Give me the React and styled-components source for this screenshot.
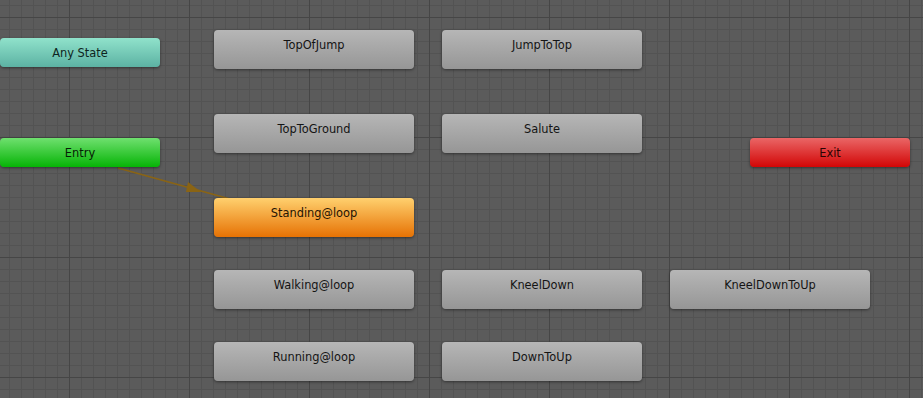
import React from 'react'
import styled, { createGlobalStyle, css } from 'styled-components'

const GlobalStyle = createGlobalStyle`
  html, body {
    margin: 0;
    padding: 0;
    background: #5a5a5a;
  }
`

const states = [
  { name: 'Any State', x: 0, y: 38, w: 160, h: 29, kind: 'any' },
  { name: 'Entry', x: 0, y: 138, w: 160, h: 29, kind: 'entry' },
  { name: 'Exit', x: 750, y: 138, w: 160, h: 29, kind: 'exit' },
  { name: 'TopOfJump', x: 214, y: 30, w: 200, h: 39 },
  { name: 'JumpToTop', x: 442, y: 30, w: 200, h: 39 },
  { name: 'TopToGround', x: 214, y: 114, w: 200, h: 39 },
  { name: 'Salute', x: 442, y: 114, w: 200, h: 39 },
  { name: 'Standing@loop', x: 214, y: 198, w: 200, h: 39, kind: 'default' },
  { name: 'Walking@loop', x: 214, y: 270, w: 200, h: 39 },
  { name: 'KneelDown', x: 442, y: 270, w: 200, h: 39 },
  { name: 'KneelDownToUp', x: 670, y: 270, w: 200, h: 39 },
  { name: 'Running@loop', x: 214, y: 342, w: 200, h: 39 },
  { name: 'DownToUp', x: 442, y: 342, w: 200, h: 39 },
]

export default function App() {
  return (
    <>
      <GlobalStyle />
      <Canvas>
        <Links width="923" height="398">
          <line x1="118" y1="168" x2="230" y2="199" stroke="#8a6414" strokeWidth="1.5" />
          <polygon points="201,192 188,182 186,192" fill="#8a6414" />
        </Links>
        {states.map((s) => (
          <StateNode
            key={s.name}
            $kind={s.kind}
            style={{ left: s.x, top: s.y, width: s.w, height: s.h }}
          >
            {s.name}
          </StateNode>
        ))}
      </Canvas>
    </>
  )
}

const Canvas = styled.div`
  position: relative;
  width: 923px;
  height: 398px;
  overflow: hidden;
  background-color: #5b5b5b;
  background-image:
    linear-gradient(to right, #464646 1px, transparent 1px),
    linear-gradient(to bottom, #464646 1px, transparent 1px),
    linear-gradient(to right, #535353 1px, transparent 1px),
    linear-gradient(to bottom, #535353 1px, transparent 1px);
  background-size: 120px 120px, 120px 120px, 12px 12px, 12px 12px;
  background-position: 69px 17px, 69px 17px, 9px 5px, 9px 5px;
`

const Links = styled.svg`
  position: absolute;
  left: 0;
  top: 0;
  z-index: 0;
`

const kinds = {
  any: css`
    background: linear-gradient(#90e2cb, #5cb2a3);
    color: #0e2420;
  `,
  entry: css`
    background: linear-gradient(#6fe06f, #06b406);
    color: #062006;
  `,
  exit: css`
    background: linear-gradient(#ea6666, #d20606);
    color: #2a0404;
  `,
  default: css`
    background: linear-gradient(#ffd06e, #e67204);
    color: #241404;
  `,
  normal: css`
    background: linear-gradient(#b6b6b6, #969696);
    color: #141414;
  `,
}

const StateNode = styled.div`
  position: absolute;
  z-index: 1;
  box-sizing: border-box;
  border-radius: 4px;
  padding-top: 8px;
  text-align: center;
  font-family: 'DejaVu Sans', Verdana, sans-serif;
  font-size: 11.4px;
  line-height: 14px;
  box-shadow: 0 1px 3px rgba(0, 0, 0, 0.45);
  ${(p) => kinds[p.$kind || 'normal']}
`
